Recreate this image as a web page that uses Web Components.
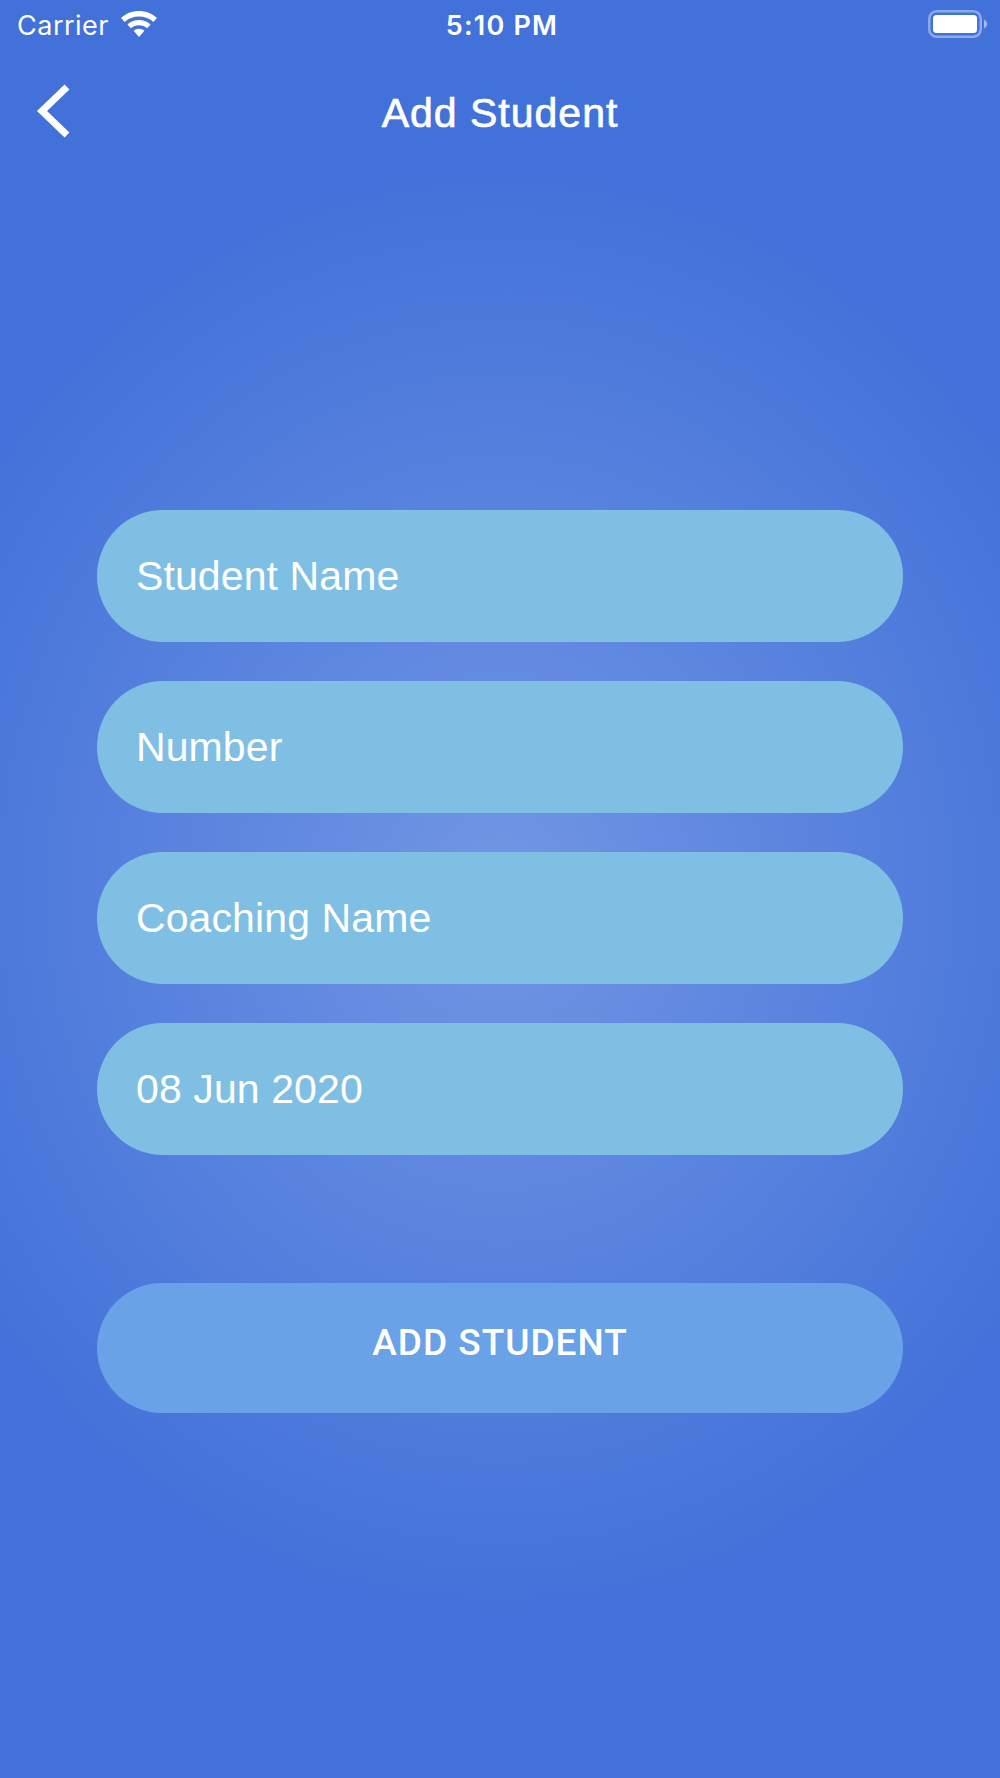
<!DOCTYPE html>
<html>
<head>
<meta charset="utf-8">
<title>Add Student</title>
<style>
html,body{margin:0;padding:0;width:1000px;height:1778px;overflow:hidden}
</style>
</head>
<body>
<add-student-screen>
  <status-bar slot="status" carrier="Carrier" time="5:10 PM"></status-bar>
  <nav-bar slot="nav">Add Student</nav-bar>
  <form-field>Student Name</form-field>
  <form-field>Number</form-field>
  <form-field>Coaching Name</form-field>
  <form-field>08 Jun 2020</form-field>
  <action-button slot="action">ADD STUDENT</action-button>
</add-student-screen>
<script>
function shadow(el, html){ el.attachShadow({mode:'open'}).innerHTML = html; }

customElements.define('add-student-screen', class extends HTMLElement{
  constructor(){ super(); shadow(this, `
  <style>
    :host{display:flex;flex-direction:column;box-sizing:border-box;width:1000px;height:1778px;
      background:radial-gradient(ellipse 640px 730px at 500px 890px,#7296e4 0%,#4271d9 100%);
      color:#fff;font-family:"Liberation Sans",Arial,sans-serif}
    .fields{display:flex;flex-direction:column;gap:39px;margin:0 97px;padding-top:334px}
    .action{display:block;margin:128px 97px 0}
  </style>
  <slot name="status"></slot>
  <slot name="nav"></slot>
  <div class="fields"><slot></slot></div>
  <div class="action"><slot name="action"></slot></div>`); }
});

customElements.define('status-bar', class extends HTMLElement{
  constructor(){ super(); shadow(this, `
  <style>
    :host{display:grid;grid-template-columns:1fr auto 1fr;align-items:center;height:50px;padding:0 13px 0 17px;
      font-family:Inter,"Noto Sans",sans-serif;color:#fff}
    .l{display:flex;align-items:center;gap:11px;font-size:27px;font-weight:400;letter-spacing:.5px}
    .l svg{margin-top:-3px}
    .t{font-size:27px;font-weight:600;letter-spacing:1.2px}
    .r{display:flex;justify-content:flex-end;align-items:center}
    .r svg{margin-top:-2px}
    svg{display:block}
  </style>
  <div class="l"><span id="c"></span>
    <svg width="38" height="28" viewBox="0 0 38 28"><path fill="#fff" d="M19 1C12 1 6 3.500 1 8.100l3.600 3.900C8.500 8.400 13.500 6.500 19 6.500s10.500 1.900 14.400 5.500L37 8.100C32 3.500 26 1 19 1zM19 10c-4.600 0-8.500 1.600-11.600 4.400l3.500 3.800c2.100-1.900 4.900-3 8.100-3s6 1.100 8.100 3l3.500-3.800C27.500 11.600 23.600 10 19 10zm0 8.800c-2.200 0-4 .7-5.400 2L19 27l5.400-6.200c-1.400-1.300-3.200-2-5.400-2z"/></svg>
  </div>
  <div class="t" id="t"></div>
  <div class="r">
    <svg width="59" height="28" viewBox="0 0 59 28">
      <rect x="1.250" y="1.250" width="51.500" height="25.500" rx="7.500" fill="none" stroke="#fff" stroke-opacity=".4" stroke-width="2.500"/>
      <rect x="5" y="5" width="44" height="18" rx="3.500" fill="#fff"/>
      <path d="M56 9.500c1.800.5 3 2.500 3 4.500s-1.200 4-3 4.500z" fill="#fff" fill-opacity=".5"/>
    </svg>
  </div>`);
    this.shadowRoot.getElementById('c').textContent=this.getAttribute('carrier');
    this.shadowRoot.getElementById('t').textContent=this.getAttribute('time');
  }
});

customElements.define('nav-bar', class extends HTMLElement{
  constructor(){ super(); shadow(this, `
  <style>
    :host{display:block;position:relative;height:126px;font-family:"Liberation Sans",Arial,sans-serif}
    .title{display:flex;justify-content:center;align-items:center;height:126px;box-sizing:border-box;
      font-size:41px;font-weight:400;letter-spacing:1px;-webkit-text-stroke:.7px #fff;color:#fff}
    svg{position:absolute;left:36px;top:34px;display:block}
  </style>
  <svg width="34" height="54" viewBox="0 0 34 54"><path d="M31 3L6 27l25 24" fill="none" stroke="#fff" stroke-width="7"/></svg>
  <div class="title"><slot></slot></div>`); }
});

customElements.define('form-field', class extends HTMLElement{
  constructor(){ super(); shadow(this, `
  <style>
    :host{display:flex;align-items:center;box-sizing:border-box;height:132px;border-radius:66px;
      background:#80bfe4;padding:0 39px;color:#fff;font:400 41px "Liberation Sans",Arial,sans-serif;letter-spacing:.1px}
  </style><slot></slot>`); }
});

customElements.define('action-button', class extends HTMLElement{
  constructor(){ super(); shadow(this, `
  <style>
    :host{display:flex;align-items:center;justify-content:center;box-sizing:border-box;height:130px;border-radius:65px;
      background:#69a2e6;padding-bottom:12px;color:#fff;font:500 37px Roboto,"Liberation Sans",sans-serif;letter-spacing:1px}
  </style><slot></slot>`); }
});
</script>
</body>
</html>
